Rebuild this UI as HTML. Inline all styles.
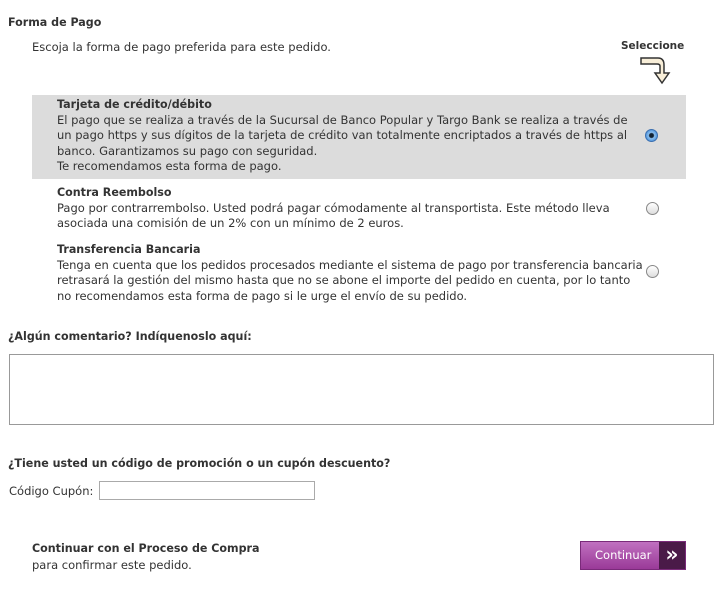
<html><head><style>
body{margin:0;width:714px;height:593px;background:#fff;font-family:"DejaVu Sans",Verdana,sans-serif;font-size:11.5px;color:#333;position:relative;overflow:hidden}
.a{position:absolute;white-space:nowrap}
b{font-weight:bold;color:#333;font-size:11.1px}
.ln{line-height:15.5px}
.r{position:absolute;width:11px;height:11px;border-radius:50%;border:1px solid #888;background:linear-gradient(#fff,#ddd)}
</style></head><body>
<div class="a" style="left:8px;top:16px"><b>Forma de Pago</b></div>
<div class="a" style="left:32px;top:40px">Escoja la forma de pago preferida para este pedido.</div>
<div class="a" style="left:621px;top:40px"><b style="font-size:10.5px">Seleccione</b></div>
<svg class="a" style="left:638px;top:56px" width="34" height="30"><path d="M3 2 H20 Q26 2 26 9 V17 H31 L24 27 L17 17 H22 V10 Q22 8 19 8 H3 Z" fill="#f8eed8" stroke="#333" stroke-width="1.5"/></svg>
<div class="a" style="left:32px;top:95px;width:654px;height:84px;background:#dcdcdc"></div>
<div class="a ln" style="left:57px;top:97px"><b>Tarjeta de crédito/débito</b><br>El pago que se realiza a través de la Sucursal de Banco Popular y Targo Bank se realiza a través de<br>un pago https y sus dígitos de la tarjeta de crédito van totalmente encriptados a través de https al<br>banco. Garantizamos su pago con seguridad.<br>Te recomendamos esta forma de pago.</div>
<div class="r" style="left:645px;top:129px;border-color:#3b6fb0;background:radial-gradient(circle,#123 0 2px,#8cc0f0 3px,#4a90d8 6px)"></div>
<div class="a ln" style="left:57px;top:185px"><b>Contra Reembolso</b><br>Pago por contrarrembolso. Usted podrá pagar cómodamente al transportista. Este método lleva<br>asociada una comisión de un 2% con un mínimo de 2 euros.</div>
<div class="r" style="left:646px;top:202px"></div>
<div class="a ln" style="left:57px;top:242px"><b>Transferencia Bancaria</b><br>Tenga en cuenta que los pedidos procesados mediante el sistema de pago por transferencia bancaria<br>retrasará la gestión del mismo hasta que no se abone el importe del pedido en cuenta, por lo tanto<br>no recomendamos esta forma de pago si le urge el envío de su pedido.</div>
<div class="r" style="left:646px;top:265px"></div>
<div class="a" style="left:8px;top:330px"><b>¿Algún comentario? Indíquenoslo aquí:</b></div>
<div class="a" style="left:9px;top:354px;width:703px;height:69px;border:1px solid #999"></div>
<div class="a" style="left:8px;top:457px"><b>¿Tiene usted un código de promoción o un cupón descuento?</b></div>
<div class="a" style="left:9px;top:484px">Código Cupón:</div>
<div class="a" style="left:99px;top:481px;width:214px;height:17px;border:1px solid #aaa"></div>
<div class="a" style="left:32px;top:542px"><b>Continuar con el Proceso de Compra</b></div>
<div class="a" style="left:32px;top:558px">para confirmar este pedido.</div>
<div class="a" style="left:580px;top:541px;width:106px;height:29px;background:linear-gradient(#c070c0,#9a3a98);border:1px solid #7a2a7a;box-sizing:border-box"></div>
<div class="a" style="left:595px;top:548px;color:#fff;font-size:11.5px">Continuar</div>
<div class="a" style="left:659px;top:542px;width:26px;height:27px;background:#4a1a48;color:#fff;font-weight:bold;font-size:20px;text-align:center;line-height:25px">»</div>
</body></html>
